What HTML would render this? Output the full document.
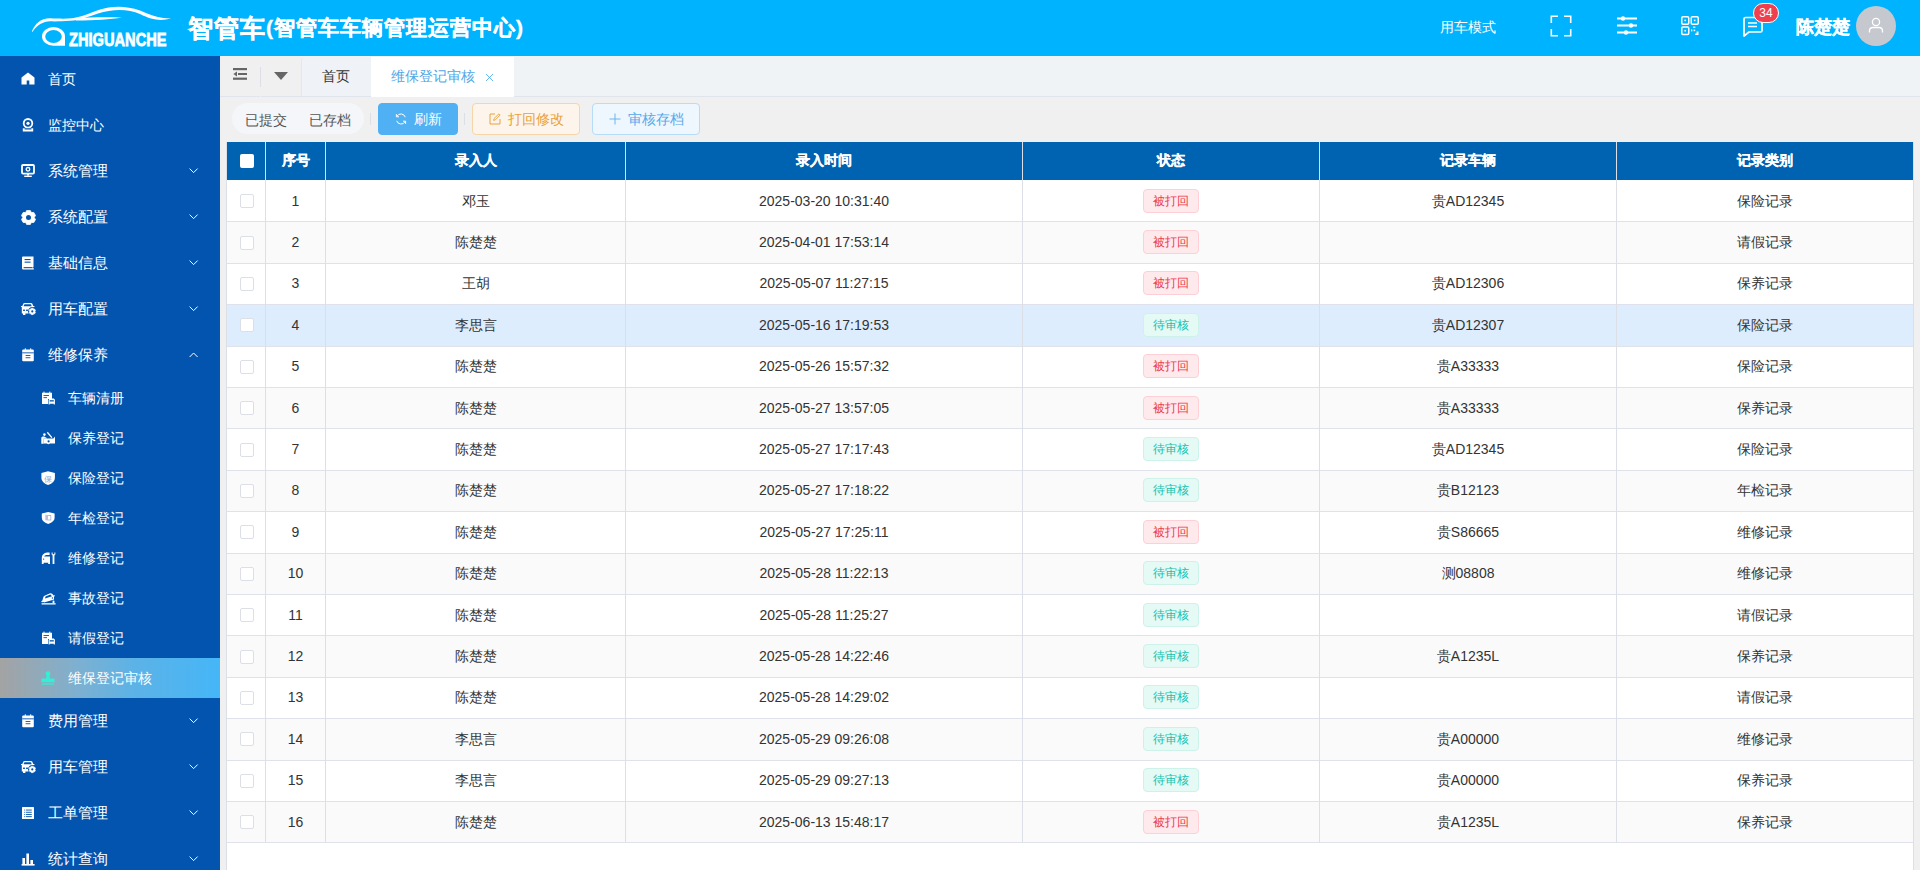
<!DOCTYPE html>
<html><head><meta charset="utf-8">
<style>
*{box-sizing:border-box;margin:0;padding:0}
html,body{width:1920px;height:870px;overflow:hidden;background:#f0f0f0;font-family:"Liberation Sans",sans-serif;font-size:14px;color:#333}
.abs{position:absolute}
#hdr{position:absolute;left:0;top:0;width:1920px;height:56px;background:#00b3fe;color:#fff}
#side{position:absolute;left:0;top:56px;width:220px;height:814px;background:#0354af;color:#fff;overflow:hidden}
.mi{position:relative;height:46px;line-height:46px}
.mi .t{position:absolute;left:48px;top:0}
.mi.sub .t{font-size:15px}
.mi .ic{position:absolute;left:21px;top:16px;width:15px;height:15px;line-height:0}
.mi .ar{position:absolute;left:189px;top:20px;width:10px;height:6px;line-height:0}
.si{position:relative;height:40px;line-height:40px}
.si .t{position:absolute;left:68px;top:0}
.si .ic{position:absolute;left:41px;top:13px;width:15px;height:15px;line-height:0}
.si.act{background:linear-gradient(90deg,#a3a3a3 0%,#7eb0d0 35%,#5db2e6 60%,#45b6f7 100%)}
#tabs{position:absolute;left:220px;top:56px;width:1700px;height:41px;background:#f0f3f6;border-bottom:1px solid #dfe4ed}
#tb{position:absolute;left:220px;top:97px;width:1700px;height:45px;background:#f0f0f0}
#tbl{position:absolute;left:226px;top:142px;width:1688px;height:740px;background:#fff;border-left:1px solid #dcdfe6;border-right:1px solid #dcdfe6}
.th{position:absolute;top:0;height:38px;background:#0063b1;color:#fff;font-weight:bold;text-align:center;line-height:36px;-webkit-text-stroke:0.25px #fff}
.hcb{display:inline-block;width:14px;height:14px;background:#fff;border-radius:2px;vertical-align:middle;margin-top:-1px;margin-left:2px}
.row{position:absolute;left:0;width:1686px;border-bottom:1px solid #dfe2ea}
.tr{position:absolute;left:0;width:1686px;height:41.4px}
.row.s{background:#fafafa}
.row.h{background:#deedfd}
.c{position:absolute;top:0;height:100%;text-align:center;display:flex;align-items:center;justify-content:center}
.c.d{padding-top:0}
.c.n{padding-top:2px}
.c.e{padding-top:2px}
.c.k{padding-top:1px;padding-left:2px}
.vl{position:absolute;top:0;width:1px;height:700px;background:#dcdfe6}
.th + .th{}
.tag{display:inline-block;width:56px;height:24px;line-height:22px;border:1px solid;border-radius:4px;font-size:12px;text-align:center}
.tag.r{background:#feeaec;border-color:#fcd0d5;color:#ec3a50}
.tag.g{background:#e5f9f5;border-color:#cdf2ea;color:#13c2ad}
.cb{display:inline-block;width:14px;height:14px;border:1px solid #dcdfe6;border-radius:2px;background:#fff}
.btn{position:absolute;top:103px;height:32px;border:1px solid;border-radius:4px;line-height:30px;font-size:14px}
</style></head><body>
<div id="hdr">
  <svg class="abs" style="left:30px;top:4px" width="145" height="44" viewBox="0 0 145 44">
    <path d="M1.8 27.6 C5 19.6 11 14.2 20 14.3 C28 14.6 34 15 42 14.3 C50 13.5 58 10 70 5.6 C80 2.2 95 1 110 6.5 C120 10.5 128 14.6 141.3 14.5 C130 17.3 122 16 110 10 C98 4.5 82 5 68 9.4 C58 12.5 50 16.2 40 16.8 C32 17.3 26 17.5 20 17.3 C13 17.6 7 21 2.6 27.8Z" fill="#fff"/>
    <path d="M46 14 C60 13 80 13 92 13.4 C80 15.6 65 16.2 46 16.5Z" fill="#fff"/>
    <path d="M23.5 23 A11.5 9.4 0 0 0 23.5 41.8 H35 V32.4 A11.5 9.4 0 0 0 23.5 23Z M23.5 26 A8.3 6.5 0 1 1 23.5 39 A8.3 6.5 0 1 1 23.5 26Z" fill="#fff" fill-rule="evenodd"/>
  </svg>
  <div class="abs" style="left:69px;top:30px;font-weight:bold;font-size:19px;line-height:19px;-webkit-text-stroke:0.8px #fff;transform:scaleX(0.77);transform-origin:0 0;white-space:nowrap">ZHIGUANCHE</div>
  <div class="abs" style="left:188px;top:13px;font-weight:bold;font-size:25px;line-height:30px;letter-spacing:1px;white-space:nowrap;-webkit-text-stroke:0.4px #fff">智管车<span style="font-size:21px;letter-spacing:1px;position:relative;top:-2px">(智管车车辆管理运营中心)</span></div>
  <div class="abs" style="left:1440px;top:18px;font-size:14px;line-height:18px">用车模式</div>
  <svg class="abs" style="left:1550px;top:15px" width="22" height="22" viewBox="0 0 22 22"><path d="M1.3 8V1.3H8 M14 1.3H20.7V8 M20.7 14V20.7H14 M8 20.7H1.3V14" fill="none" stroke="#fff" stroke-width="1.6"/></svg>
  <svg class="abs" style="left:1617px;top:16px" width="20" height="20" viewBox="0 0 20 20"><g stroke="#fff" stroke-width="1.8" fill="none"><path d="M0 2.5H20 M0 9.5H20 M0 16.5H20"/></g><circle cx="6" cy="2.5" r="2.2" fill="#fff"/><circle cx="14" cy="9.5" r="2.2" fill="#fff"/><circle cx="9" cy="16.5" r="2.2" fill="#fff"/></svg>
  <svg class="abs" style="left:1681px;top:16px" width="18" height="20" viewBox="0 0 18 20"><g fill="none" stroke="#fff" stroke-width="1.5"><rect x="0.75" y="0.75" width="7" height="7.5" rx="1.2"/><rect x="10.25" y="0.75" width="7" height="7.5" rx="1.2"/><rect x="0.75" y="11" width="7" height="7.5" rx="1.2"/></g><g fill="#fff"><rect x="3.4" y="3.6" width="1.6" height="1.6"/><rect x="12.9" y="3.6" width="1.6" height="1.6"/><rect x="3.4" y="13.9" width="1.6" height="1.6"/><rect x="12" y="10.6" width="2.4" height="1.2"/><rect x="10" y="13.4" width="1.3" height="2"/><rect x="12.6" y="13.6" width="1.6" height="1.6"/><path d="M15.6 15.4H17.5V19H14.2V17.4H15.6Z"/></g></svg>
  <svg class="abs" style="left:1742px;top:16px" width="22" height="22" viewBox="0 0 22 22"><path d="M2 3 Q2 1.5 3.5 1.5 H18.5 Q20 1.5 20 3 V14.5 Q20 16 18.5 16 H7 L2 20Z" fill="none" stroke="#fff" stroke-width="1.7" stroke-linejoin="round"/><path d="M6 7H15 M6 10.5H15" stroke="#fff" stroke-width="1.7"/></svg>
  <div class="abs" style="left:1753px;top:3px;width:26px;height:20px;border-radius:10px;background:#f0404f;border:1px solid #fff;color:#fff;font-size:12px;line-height:18px;text-align:center">34</div>
  <div class="abs" style="left:1796px;top:15px;font-weight:bold;font-size:18px;line-height:24px;-webkit-text-stroke:0.3px #fff">陈楚楚</div>
  <div class="abs" style="left:1856px;top:6px;width:40px;height:40px;border-radius:50%;background:#c5c8cf"></div>
  <svg class="abs" style="left:1868px;top:17px" width="16" height="16" viewBox="0 0 16 16"><circle cx="8" cy="5" r="3.6" fill="none" stroke="#fff" stroke-width="1.3"/><path d="M1.5 15.5 V14 Q1.5 10.5 5 10.5 H11 Q14.5 10.5 14.5 14 V15.5" fill="none" stroke="#fff" stroke-width="1.3"/></svg>
</div>
<div id="side"><div class="mi"><span class="ic"><svg width="14" height="14" viewBox="0 0 14 14"><path d="M7 0.5L13.5 5.5V12.5H8.3V8.5H5.7V12.5H0.5V5.5Z" fill="#fff"/></svg></span><span class="t">首页</span></div><div class="mi"><span class="ic"><svg width="14" height="14" viewBox="0 0 14 14"><circle cx="7" cy="5.3" r="4.3" fill="none" stroke="#fff" stroke-width="1.8"/><circle cx="7" cy="5.3" r="1.6" fill="#fff"/><rect x="1.8" y="10.3" width="10.4" height="3.2" fill="#fff"/><rect x="3.6" y="10.3" width="6.8" height="1.2" fill="#0354af"/></svg></span><span class="t">监控中心</span></div><div class="mi sub"><span class="ic"><svg width="14" height="14" viewBox="0 0 14 14"><rect x="1" y="1" width="12" height="8.6" rx="1" fill="none" stroke="#fff" stroke-width="1.8"/><circle cx="7" cy="5.3" r="1.8" fill="none" stroke="#fff" stroke-width="1.3"/><rect x="6" y="9.6" width="2" height="2" fill="#fff"/><rect x="3.2" y="11.6" width="7.6" height="1.4" fill="#fff"/></svg></span><span class="t">系统管理</span><span class="ar"><svg width="10" height="6" viewBox="0 0 10 6"><path d="M0.6 0.6L4.6 4.6L8.6 0.6" fill="none" stroke="#fff" stroke-width="1"/></svg></span></div><div class="mi sub"><span class="ic"><svg width="15" height="15" viewBox="0 0 15 15"><path d="M4.65 2.56 L5.73 0.42 L9.27 0.42 L10.35 2.56 L12.75 2.43 L14.52 5.49 L13.20 7.50 L14.52 9.51 L12.75 12.57 L10.35 12.44 L9.27 14.58 L5.73 14.58 L4.65 12.44 L2.25 12.57 L0.48 9.51 L1.80 7.50 L0.48 5.49 L2.25 2.43Z" fill="#fff" stroke="#fff" stroke-width="0.8" stroke-linejoin="round"/><circle cx="7.5" cy="7.5" r="2.5" fill="#0354af"/></svg></span><span class="t">系统配置</span><span class="ar"><svg width="10" height="6" viewBox="0 0 10 6"><path d="M0.6 0.6L4.6 4.6L8.6 0.6" fill="none" stroke="#fff" stroke-width="1"/></svg></span></div><div class="mi sub"><span class="ic"><svg width="14" height="14" viewBox="0 0 14 14"><path d="M1 1.5Q1 0.5 2 0.5H12.5V11.2H11.5V12.3H12.8V13.5H2.2Q1 13.5 1 12.2Z" fill="#fff"/><rect x="3.6" y="3" width="6" height="1.1" fill="#0354af"/><rect x="3.6" y="5.6" width="6" height="1.1" fill="#0354af"/><rect x="2.6" y="11.1" width="8.6" height="1.1" fill="#0354af"/></svg></span><span class="t">基础信息</span><span class="ar"><svg width="10" height="6" viewBox="0 0 10 6"><path d="M0.6 0.6L4.6 4.6L8.6 0.6" fill="none" stroke="#fff" stroke-width="1"/></svg></span></div><div class="mi sub"><span class="ic"><svg width="15" height="14" viewBox="0 0 15 14"><path d="M0 3.9H1.3L2.4 1.6Q2.8 0.9 3.6 0.9H10Q10.8 0.9 11.2 1.6L12.3 3.9H13.4V5.1H12.5V10.6H10.9V12.9H8.8V11.4H4.4V12.9H2V11.4H0.8V5.1H0Z" fill="#fff"/><path d="M3.4 2.3H9.9L10.7 4.3H2.6Z" fill="#0354af"/><rect x="2" y="7.6" width="2" height="1.3" fill="#0354af"/><rect x="5" y="7.6" width="2" height="1.3" fill="#0354af"/><circle cx="11.3" cy="9.4" r="4.3" fill="#0354af"/><path d="M9.98 7.28 L10.36 6.13 L12.24 6.13 L12.62 7.28 L12.47 7.19 L13.66 6.95 L14.60 8.58 L13.80 9.49 L13.80 9.31 L14.60 10.22 L13.66 11.85 L12.47 11.61 L12.62 11.52 L12.24 12.67 L10.36 12.67 L9.98 11.52 L10.13 11.61 L8.94 11.85 L8.00 10.22 L8.80 9.31 L8.80 9.49 L8.00 8.58 L8.94 6.95 L10.13 7.19Z" fill="#fff" stroke="#fff" stroke-width="0.5" stroke-linejoin="round"/><circle cx="11.3" cy="9.4" r="1.1" fill="#0354af"/></svg></span><span class="t">用车配置</span><span class="ar"><svg width="10" height="6" viewBox="0 0 10 6"><path d="M0.6 0.6L4.6 4.6L8.6 0.6" fill="none" stroke="#fff" stroke-width="1"/></svg></span></div><div class="mi sub"><span class="ic"><svg width="14" height="14" viewBox="0 0 14 14"><rect x="1.2" y="1.6" width="11.6" height="11.6" rx="1" fill="#fff"/><rect x="1.2" y="4.4" width="11.6" height="0.9" fill="#0354af"/><rect x="4.6" y="7" width="4.8" height="0.9" fill="#0354af"/><rect x="4.6" y="9.3" width="4.8" height="0.9" fill="#0354af"/><rect x="3.8" y="0.3" width="1" height="1.8" fill="#fff"/><rect x="9.2" y="0.3" width="1" height="1.8" fill="#fff"/></svg></span><span class="t">维修保养</span><span class="ar"><svg width="10" height="6" viewBox="0 0 10 6"><path d="M0.6 5L4.6 1L8.6 5" fill="none" stroke="#fff" stroke-width="1"/></svg></span></div><div class="si"><span class="ic"><svg width="15" height="14" viewBox="0 0 15 14"><path d="M1 1.8H11V8H7V13H1Z" fill="#fff"/><rect x="2.5" y="0.6" width="1" height="2" fill="#fff"/><rect x="8.3" y="0.6" width="1" height="2" fill="#fff"/><rect x="2.5" y="4" width="5.5" height="0.9" fill="#0354af"/><rect x="2.5" y="6.2" width="3.5" height="0.9" fill="#0354af"/><path d="M7.6 9Q7.9 7.5 9 7.5H12.6Q13.6 7.5 13.9 9V13.5H12.8V12.7H8.7V13.5H7.6Z" fill="#fff"/><rect x="8.7" y="9.2" width="4.1" height="1.3" fill="#0354af"/></svg></span><span class="t">车辆清册</span></div><div class="si"><span class="ic"><svg width="15" height="14" viewBox="0 0 15 14"><circle cx="3.4" cy="3.6" r="1.3" fill="#fff"/><path d="M0.3 12.7V7Q0.3 5.4 1.9 5.4H3.2L5.8 6.9V7.6H2.6V12.7Z" fill="#fff"/><path d="M2.6 7.6H12.4L14 5.4V12.4H8.8Q8.4 13.2 7.4 13.2Q6.4 13.2 6 12.4H2.6Z" fill="#fff"/><path d="M6.3 1.3L10.9 6.6" stroke="#fff" stroke-width="1.3"/><circle cx="7.6" cy="10.3" r="1.1" fill="#0354af"/></svg></span><span class="t">保养登记</span></div><div class="si"><span class="ic"><svg width="15" height="15" viewBox="0 0 15 15"><path d="M7 0.3L13.9 2.1V7Q13.9 11.6 7 14Q0.4 11.6 0.4 7V2.1Z" fill="#fff"/><text x="7.1" y="10.6" font-size="7.5" text-anchor="middle" fill="#8ea8d2" font-family="Liberation Sans">保</text></svg></span><span class="t">保险登记</span></div><div class="si"><span class="ic"><svg width="15" height="15" viewBox="0 0 15 15"><path d="M7.2 1L13.6 2.6V6.8Q13.6 10.8 7.2 13Q0.8 10.8 0.8 6.8V2.6Z" fill="#fff"/><rect x="4.6" y="3.8" width="1" height="5.5" fill="#9a8fd0"/><rect x="6.6" y="4.4" width="3.2" height="4.6" fill="none" stroke="#9bb4da" stroke-width="0.8"/></svg></span><span class="t">年检登记</span></div><div class="si"><span class="ic"><svg width="15" height="14" viewBox="0 0 15 14"><path d="M0.8 12.9V6.4Q0.8 4.6 2.2 3.2Q3.8 1.6 6 1.6H8.6V4H5.4Q3.6 4 3.1 5.6H9V12.9H7.2V11.8H2.6V12.9Z" fill="#fff"/><circle cx="2.6" cy="8.1" r="0.7" fill="#0354af"/><path d="M10.6 1.4Q10.2 3.6 11.6 4.6V12.9H13.4V4.6Q14.8 3.6 14.4 1.4L13.4 1.4V3.2H11.6V1.4Z" fill="#fff"/></svg></span><span class="t">维修登记</span></div><div class="si"><span class="ic"><svg width="15" height="14" viewBox="0 0 15 14"><path d="M1.4 9.6L2.2 6.6Q2.6 5.2 4 4.6L8.6 2.4Q10.2 1.8 11.4 3L12.6 4.4L13.6 4.1L13.8 5.2L12.9 5.6L13.1 8.6L3 11.6L2.6 10.9L0.6 11.3L0.3 10.2Z" fill="#fff"/><path d="M4.5 5.6L9.4 3.4L11 5.3L4 7.4Z" fill="#0354af"/><circle cx="11.4" cy="7" r="0.7" fill="#0354af"/><rect x="0.6" y="12.2" width="14" height="1.3" fill="#fff"/><rect x="11.6" y="9.6" width="1.8" height="2.6" fill="#fff"/></svg></span><span class="t">事故登记</span></div><div class="si"><span class="ic"><svg width="15" height="14" viewBox="0 0 15 14"><path d="M1 1.8H11V8H7V13H1Z" fill="#fff"/><rect x="2.5" y="0.6" width="1" height="2" fill="#fff"/><rect x="8.3" y="0.6" width="1" height="2" fill="#fff"/><rect x="2.5" y="4" width="5.5" height="0.9" fill="#0354af"/><rect x="2.5" y="6.2" width="3.5" height="0.9" fill="#0354af"/><path d="M7.6 9Q7.9 7.5 9 7.5H12.6Q13.6 7.5 13.9 9V13.5H12.8V12.7H8.7V13.5H7.6Z" fill="#fff"/><rect x="8.7" y="9.2" width="4.1" height="1.3" fill="#0354af"/></svg></span><span class="t">请假登记</span></div><div class="si act"><span class="ic"><svg width="14" height="14" viewBox="0 0 14 14"><circle cx="7" cy="2.6" r="2.4" fill="#33efd6"/><path d="M5.6 4H8.4L8.8 7.6H12.6Q13.6 7.6 13.6 8.6V11.2H0.4V8.6Q0.4 7.6 1.4 7.6H5.2Z" fill="#33efd6"/><rect x="1" y="12.4" width="12" height="1.2" fill="#33efd6"/></svg></span><span class="t">维保登记审核</span></div><div class="mi sub"><span class="ic"><svg width="14" height="14" viewBox="0 0 14 14"><rect x="1.2" y="1.6" width="11.6" height="11.6" rx="1" fill="#fff"/><rect x="1.2" y="4.4" width="11.6" height="0.9" fill="#0354af"/><rect x="4.6" y="7" width="4.8" height="0.9" fill="#0354af"/><rect x="4.6" y="9.3" width="4.8" height="0.9" fill="#0354af"/><rect x="3.8" y="0.3" width="1" height="1.8" fill="#fff"/><rect x="9.2" y="0.3" width="1" height="1.8" fill="#fff"/></svg></span><span class="t">费用管理</span><span class="ar"><svg width="10" height="6" viewBox="0 0 10 6"><path d="M0.6 0.6L4.6 4.6L8.6 0.6" fill="none" stroke="#fff" stroke-width="1"/></svg></span></div><div class="mi sub"><span class="ic"><svg width="15" height="14" viewBox="0 0 15 14"><path d="M0 3.9H1.3L2.4 1.6Q2.8 0.9 3.6 0.9H10Q10.8 0.9 11.2 1.6L12.3 3.9H13.4V5.1H12.5V10.6H10.9V12.9H8.8V11.4H4.4V12.9H2V11.4H0.8V5.1H0Z" fill="#fff"/><path d="M3.4 2.3H9.9L10.7 4.3H2.6Z" fill="#0354af"/><rect x="2" y="7.6" width="2" height="1.3" fill="#0354af"/><rect x="5" y="7.6" width="2" height="1.3" fill="#0354af"/><circle cx="11.3" cy="9.4" r="4.3" fill="#0354af"/><path d="M9.98 7.28 L10.36 6.13 L12.24 6.13 L12.62 7.28 L12.47 7.19 L13.66 6.95 L14.60 8.58 L13.80 9.49 L13.80 9.31 L14.60 10.22 L13.66 11.85 L12.47 11.61 L12.62 11.52 L12.24 12.67 L10.36 12.67 L9.98 11.52 L10.13 11.61 L8.94 11.85 L8.00 10.22 L8.80 9.31 L8.80 9.49 L8.00 8.58 L8.94 6.95 L10.13 7.19Z" fill="#fff" stroke="#fff" stroke-width="0.5" stroke-linejoin="round"/><circle cx="11.3" cy="9.4" r="1.1" fill="#0354af"/></svg></span><span class="t">用车管理</span><span class="ar"><svg width="10" height="6" viewBox="0 0 10 6"><path d="M0.6 0.6L4.6 4.6L8.6 0.6" fill="none" stroke="#fff" stroke-width="1"/></svg></span></div><div class="mi sub"><span class="ic"><svg width="14" height="14" viewBox="0 0 14 14"><rect x="1" y="1" width="12" height="12" rx="0.6" fill="#fff"/><g fill="#0354af"><rect x="3.2" y="3.6" width="1" height="0.9"/><rect x="5" y="3.6" width="5.8" height="0.9"/><rect x="3.2" y="5.8" width="1" height="0.9"/><rect x="5" y="5.8" width="5.8" height="0.9"/><rect x="3.2" y="8" width="1" height="0.9"/><rect x="5" y="8" width="5.8" height="0.9"/><rect x="3.2" y="10.2" width="1" height="0.9"/><rect x="5" y="10.2" width="5.8" height="0.9"/></g></svg></span><span class="t">工单管理</span><span class="ar"><svg width="10" height="6" viewBox="0 0 10 6"><path d="M0.6 0.6L4.6 4.6L8.6 0.6" fill="none" stroke="#fff" stroke-width="1"/></svg></span></div><div class="mi sub"><span class="ic"><svg width="14" height="14" viewBox="0 0 14 14"><g fill="#fff"><rect x="0.6" y="12" width="13" height="1.6"/><rect x="1.4" y="6" width="2.6" height="6"/><rect x="5.4" y="1.5" width="2.6" height="10.5"/><rect x="9.4" y="8" width="2.6" height="4"/></g></svg></span><span class="t">统计查询</span><span class="ar"><svg width="10" height="6" viewBox="0 0 10 6"><path d="M0.6 0.6L4.6 4.6L8.6 0.6" fill="none" stroke="#fff" stroke-width="1"/></svg></span></div></div>
<div id="tabs">
  <div class="abs" style="left:0;top:0;width:81px;height:40px;background:#f0f0f0"></div><div class="abs" style="left:40px;top:39px;width:1px;height:2px;background:#f0f0f0"></div>
  <svg class="abs" style="left:13px;top:12px" width="14" height="12" viewBox="0 0 14 12"><g fill="#666"><rect x="0" y="0" width="14" height="2.2"/><rect x="5" y="5" width="9" height="2"/><rect x="0" y="9.6" width="14" height="2.2"/><path d="M0.4 6L4 3.6V8.4Z"/></g></svg>
  <div class="abs" style="left:40px;top:11px;width:1px;height:20px;background:#dcdfe6"></div>
  <svg class="abs" style="left:54px;top:16px" width="14" height="9" viewBox="0 0 14 9"><path d="M0 0H14L7 8Z" fill="#666"/></svg>
  <div class="abs" style="left:81px;top:1px;width:70px;height:39px;background:#eff3f7;border-left:1px solid #e4e7ed;border-top-left-radius:4px"></div>
  <div class="abs" style="left:102px;top:11px;line-height:18px;color:#333">首页</div>
  <div class="abs" style="left:151px;top:1px;width:143px;height:40px;background:#fff"></div>
  <div class="abs" style="left:171px;top:11px;line-height:18px;color:#4fa6e8">维保登记审核</div>
  <svg class="abs" style="left:265px;top:17px" width="9" height="9" viewBox="0 0 9 9"><path d="M1 1L8 8M8 1L1 8" stroke="#5aaeea" stroke-width="0.9"/></svg>
</div>
<div id="tb">
  <div class="abs" style="left:12px;top:6px;width:132px;height:31px;border-radius:16px;background:#f4f6f9"></div>
  <div class="abs" style="left:25px;top:14px;line-height:18px;color:#555">已提交</div>
  <div class="abs" style="left:89px;top:14px;line-height:18px;color:#555">已存档</div>
  <div class="abs" style="left:150px;top:16px;width:1px;height:12px;background:#dcdfe6"></div>
  <div class="abs" style="left:244px;top:16px;width:1px;height:12px;background:#dcdfe6"></div>
</div>
<div class="btn" style="left:378px;width:80px;background:#50b0f4;border-color:#50b0f4;color:#fff">
  <svg class="abs" style="left:16px;top:9px" width="12" height="12" viewBox="0 0 12 12"><path d="M10.3 4.2 A4.6 4.6 0 0 0 1.9 3.3 M1.7 7.8 A4.6 4.6 0 0 0 10.1 8.7" fill="none" stroke="#fff" stroke-width="1"/><path d="M1.4 1.2V3.8H4" fill="none" stroke="#fff" stroke-width="1"/><path d="M10.6 10.8V8.2H8" fill="none" stroke="#fff" stroke-width="1"/></svg>
  <span class="abs" style="left:35px;top:0">刷新</span>
</div>
<div class="btn" style="left:472px;width:108px;background:#fdf5eb;border-color:#f4d6a8;color:#e8a03a">
  <svg class="abs" style="left:16px;top:9px" width="12" height="12" viewBox="0 0 12 12"><path d="M6 1H1V11H11V6" fill="none" stroke="#e8a03a" stroke-width="1"/><path d="M4.6 7.4L5 5.6L10 0.8L11.2 2L6.3 6.9Z" fill="none" stroke="#e8a03a" stroke-width="0.9"/></svg>
  <span class="abs" style="left:35px;top:0">打回修改</span>
</div>
<div class="btn" style="left:592px;width:108px;background:#eef6fe;border-color:#b6dcf8;color:#55a8ea">
  <svg class="abs" style="left:16px;top:9px" width="12" height="12" viewBox="0 0 12 12"><path d="M6 0.5V11.5M0.5 6H11.5" stroke="#6db4ec" stroke-width="1"/></svg>
  <span class="abs" style="left:35px;top:0">审核存档</span>
</div>
<div id="tbl"><div class="th" style="left:0px;width:38px"><span class="hcb"></span></div><div class="th" style="left:39px;width:59px">序号</div><div class="th" style="left:99px;width:299px">录入人</div><div class="th" style="left:399px;width:396px">录入时间</div><div class="th" style="left:796px;width:296px">状态</div><div class="th" style="left:1093px;width:296px">记录车辆</div><div class="th" style="left:1390px;width:296px">记录类别</div><div class="row" style="top:38px;height:42px"></div><div class="row s" style="top:80px;height:42px"></div><div class="row" style="top:122px;height:41px"></div><div class="row s h" style="top:163px;height:42px"></div><div class="row" style="top:205px;height:41px"></div><div class="row s" style="top:246px;height:41px"></div><div class="row" style="top:287px;height:42px"></div><div class="row s" style="top:329px;height:41px"></div><div class="row" style="top:370px;height:42px"></div><div class="row s" style="top:412px;height:41px"></div><div class="row" style="top:453px;height:41px"></div><div class="row s" style="top:494px;height:42px"></div><div class="row" style="top:536px;height:41px"></div><div class="row s" style="top:577px;height:42px"></div><div class="row" style="top:619px;height:41px"></div><div class="row s" style="top:660px;height:41px"></div><div class="vl" style="left:38px;height:700px"></div><div class="vl" style="left:98px;height:700px"></div><div class="vl" style="left:398px;height:700px"></div><div class="vl" style="left:795px;height:700px"></div><div class="vl" style="left:1092px;height:700px"></div><div class="vl" style="left:1389px;height:700px"></div><div class="tr" style="top:38.00px"><div class="c k" style="left:0px;width:38px"><span class="cb"></span></div><div class="c d" style="left:39px;width:59px">1</div><div class="c n" style="left:99px;width:299px">邓玉</div><div class="c d" style="left:399px;width:396px">2025-03-20 10:31:40</div><div class="c" style="left:796px;width:296px"><span class="tag r">被打回</span></div><div class="c e" style="left:1093px;width:296px">贵AD12345</div><div class="c n" style="left:1390px;width:296px">保险记录</div></div><div class="tr" style="top:79.40px"><div class="c k" style="left:0px;width:38px"><span class="cb"></span></div><div class="c d" style="left:39px;width:59px">2</div><div class="c n" style="left:99px;width:299px">陈楚楚</div><div class="c d" style="left:399px;width:396px">2025-04-01 17:53:14</div><div class="c" style="left:796px;width:296px"><span class="tag r">被打回</span></div><div class="c e" style="left:1093px;width:296px"></div><div class="c n" style="left:1390px;width:296px">请假记录</div></div><div class="tr" style="top:120.80px"><div class="c k" style="left:0px;width:38px"><span class="cb"></span></div><div class="c d" style="left:39px;width:59px">3</div><div class="c n" style="left:99px;width:299px">王胡</div><div class="c d" style="left:399px;width:396px">2025-05-07 11:27:15</div><div class="c" style="left:796px;width:296px"><span class="tag r">被打回</span></div><div class="c e" style="left:1093px;width:296px">贵AD12306</div><div class="c n" style="left:1390px;width:296px">保养记录</div></div><div class="tr" style="top:162.20px"><div class="c k" style="left:0px;width:38px"><span class="cb"></span></div><div class="c d" style="left:39px;width:59px">4</div><div class="c n" style="left:99px;width:299px">李思言</div><div class="c d" style="left:399px;width:396px">2025-05-16 17:19:53</div><div class="c" style="left:796px;width:296px"><span class="tag g">待审核</span></div><div class="c e" style="left:1093px;width:296px">贵AD12307</div><div class="c n" style="left:1390px;width:296px">保险记录</div></div><div class="tr" style="top:203.60px"><div class="c k" style="left:0px;width:38px"><span class="cb"></span></div><div class="c d" style="left:39px;width:59px">5</div><div class="c n" style="left:99px;width:299px">陈楚楚</div><div class="c d" style="left:399px;width:396px">2025-05-26 15:57:32</div><div class="c" style="left:796px;width:296px"><span class="tag r">被打回</span></div><div class="c e" style="left:1093px;width:296px">贵A33333</div><div class="c n" style="left:1390px;width:296px">保险记录</div></div><div class="tr" style="top:245.00px"><div class="c k" style="left:0px;width:38px"><span class="cb"></span></div><div class="c d" style="left:39px;width:59px">6</div><div class="c n" style="left:99px;width:299px">陈楚楚</div><div class="c d" style="left:399px;width:396px">2025-05-27 13:57:05</div><div class="c" style="left:796px;width:296px"><span class="tag r">被打回</span></div><div class="c e" style="left:1093px;width:296px">贵A33333</div><div class="c n" style="left:1390px;width:296px">保养记录</div></div><div class="tr" style="top:286.40px"><div class="c k" style="left:0px;width:38px"><span class="cb"></span></div><div class="c d" style="left:39px;width:59px">7</div><div class="c n" style="left:99px;width:299px">陈楚楚</div><div class="c d" style="left:399px;width:396px">2025-05-27 17:17:43</div><div class="c" style="left:796px;width:296px"><span class="tag g">待审核</span></div><div class="c e" style="left:1093px;width:296px">贵AD12345</div><div class="c n" style="left:1390px;width:296px">保险记录</div></div><div class="tr" style="top:327.80px"><div class="c k" style="left:0px;width:38px"><span class="cb"></span></div><div class="c d" style="left:39px;width:59px">8</div><div class="c n" style="left:99px;width:299px">陈楚楚</div><div class="c d" style="left:399px;width:396px">2025-05-27 17:18:22</div><div class="c" style="left:796px;width:296px"><span class="tag g">待审核</span></div><div class="c e" style="left:1093px;width:296px">贵B12123</div><div class="c n" style="left:1390px;width:296px">年检记录</div></div><div class="tr" style="top:369.20px"><div class="c k" style="left:0px;width:38px"><span class="cb"></span></div><div class="c d" style="left:39px;width:59px">9</div><div class="c n" style="left:99px;width:299px">陈楚楚</div><div class="c d" style="left:399px;width:396px">2025-05-27 17:25:11</div><div class="c" style="left:796px;width:296px"><span class="tag r">被打回</span></div><div class="c e" style="left:1093px;width:296px">贵S86665</div><div class="c n" style="left:1390px;width:296px">维修记录</div></div><div class="tr" style="top:410.60px"><div class="c k" style="left:0px;width:38px"><span class="cb"></span></div><div class="c d" style="left:39px;width:59px">10</div><div class="c n" style="left:99px;width:299px">陈楚楚</div><div class="c d" style="left:399px;width:396px">2025-05-28 11:22:13</div><div class="c" style="left:796px;width:296px"><span class="tag g">待审核</span></div><div class="c e" style="left:1093px;width:296px">测08808</div><div class="c n" style="left:1390px;width:296px">维修记录</div></div><div class="tr" style="top:452.00px"><div class="c k" style="left:0px;width:38px"><span class="cb"></span></div><div class="c d" style="left:39px;width:59px">11</div><div class="c n" style="left:99px;width:299px">陈楚楚</div><div class="c d" style="left:399px;width:396px">2025-05-28 11:25:27</div><div class="c" style="left:796px;width:296px"><span class="tag g">待审核</span></div><div class="c e" style="left:1093px;width:296px"></div><div class="c n" style="left:1390px;width:296px">请假记录</div></div><div class="tr" style="top:493.40px"><div class="c k" style="left:0px;width:38px"><span class="cb"></span></div><div class="c d" style="left:39px;width:59px">12</div><div class="c n" style="left:99px;width:299px">陈楚楚</div><div class="c d" style="left:399px;width:396px">2025-05-28 14:22:46</div><div class="c" style="left:796px;width:296px"><span class="tag g">待审核</span></div><div class="c e" style="left:1093px;width:296px">贵A1235L</div><div class="c n" style="left:1390px;width:296px">保养记录</div></div><div class="tr" style="top:534.80px"><div class="c k" style="left:0px;width:38px"><span class="cb"></span></div><div class="c d" style="left:39px;width:59px">13</div><div class="c n" style="left:99px;width:299px">陈楚楚</div><div class="c d" style="left:399px;width:396px">2025-05-28 14:29:02</div><div class="c" style="left:796px;width:296px"><span class="tag g">待审核</span></div><div class="c e" style="left:1093px;width:296px"></div><div class="c n" style="left:1390px;width:296px">请假记录</div></div><div class="tr" style="top:576.20px"><div class="c k" style="left:0px;width:38px"><span class="cb"></span></div><div class="c d" style="left:39px;width:59px">14</div><div class="c n" style="left:99px;width:299px">李思言</div><div class="c d" style="left:399px;width:396px">2025-05-29 09:26:08</div><div class="c" style="left:796px;width:296px"><span class="tag g">待审核</span></div><div class="c e" style="left:1093px;width:296px">贵A00000</div><div class="c n" style="left:1390px;width:296px">维修记录</div></div><div class="tr" style="top:617.60px"><div class="c k" style="left:0px;width:38px"><span class="cb"></span></div><div class="c d" style="left:39px;width:59px">15</div><div class="c n" style="left:99px;width:299px">李思言</div><div class="c d" style="left:399px;width:396px">2025-05-29 09:27:13</div><div class="c" style="left:796px;width:296px"><span class="tag g">待审核</span></div><div class="c e" style="left:1093px;width:296px">贵A00000</div><div class="c n" style="left:1390px;width:296px">保养记录</div></div><div class="tr" style="top:659.00px"><div class="c k" style="left:0px;width:38px"><span class="cb"></span></div><div class="c d" style="left:39px;width:59px">16</div><div class="c n" style="left:99px;width:299px">陈楚楚</div><div class="c d" style="left:399px;width:396px">2025-06-13 15:48:17</div><div class="c" style="left:796px;width:296px"><span class="tag r">被打回</span></div><div class="c e" style="left:1093px;width:296px">贵A1235L</div><div class="c n" style="left:1390px;width:296px">保养记录</div></div></div>
</body></html>
